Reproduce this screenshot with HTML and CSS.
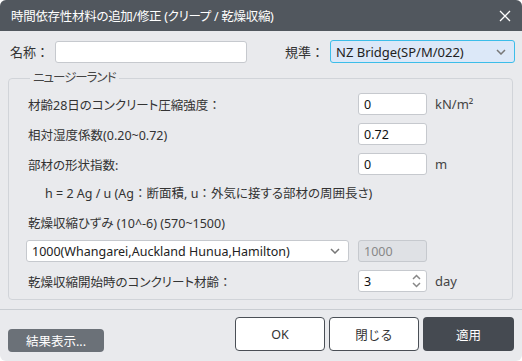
FILE: index.html
```html
<!DOCTYPE html>
<html lang="ja">
<head>
    <meta charset="UTF-8">
    <title>時間依存性材料の追加/修正</title>
    <link rel="stylesheet" href="styles.css">
</head>
<body>
    <div class="dialog">
        <!-- Titre -->
        <div class="titlebar">
            <span class="title">時間依存性材料の追加/修正 (クリープ / 乾燥収縮)</span>
            <svg class="close" width="12" height="12" viewBox="0 0 12 12"><path d="M1 1L11 11M11 1L1 11" stroke="#fff" stroke-width="1.3"/></svg>
        </div>

        <div class="top-row">
            <label class="name-label">名称<span class="colon">：</span></label>
            <input type="text" class="name-input">
            <label class="std-label">規準<span class="colon">：</span></label>
            <div class="select std-select">
                <span>NZ Bridge(SP/M/022)</span>
                <svg width="10" height="6" viewBox="0 0 10 6"><path d="M1 1L5 5L9 1" fill="none" stroke="#777" stroke-width="1.5"/></svg>
            </div>
        </div>

        <fieldset class="group">
            <legend>ニュージーランド</legend>
            <div class="row">
                <span class="lbl">材齢28日のコンクリート圧縮強度<span class="colon">：</span></span>
                <input type="text" class="num" value="0">
                <span class="unit">kN/m²</span>
            </div>
            <div class="row">
                <span class="lbl">相対湿度係数(0.20~0.72)</span>
                <input type="text" class="num" value="0.72">
                <span class="unit"></span>
            </div>
            <div class="row">
                <span class="lbl">部材の形状指数:</span>
                <input type="text" class="num" value="0">
                <span class="unit">m</span>
            </div>
            <div class="formula">h = 2 Ag / u (Ag<span class="colon">：</span>断面積, u<span class="colon">：</span>外気に接する部材の周囲長さ)</div>
            <div class="sub-title">乾燥収縮ひずみ (10^-6) (570~1500)</div>
            <div class="row">
                <div class="select city-select">
                    <span>1000(Whangarei,Auckland Hunua,Hamilton)</span>
                    <svg width="10" height="6" viewBox="0 0 10 6"><path d="M1 1L5 5L9 1" fill="none" stroke="#777" stroke-width="1.5"/></svg>
                </div>
                <input type="text" class="num disabled" value="1000" disabled>
                <span class="unit"></span>
            </div>
            <div class="row">
                <span class="lbl">乾燥収縮開始時のコンクリート材齢<span class="colon">：</span></span>
                <div class="spin">
                    <span>3</span>
                    <svg width="9" height="16" viewBox="0 0 9 16"><path d="M1 6L4.5 2.5L8 6M1 10L4.5 13.5L8 10" fill="none" stroke="#888" stroke-width="1.5"/></svg>
                </div>
                <span class="unit">day</span>
            </div>
        </fieldset>

        <div class="footer">
            <button class="btn btn-result">結果表示...</button>
            <div class="footer-right">
                <button class="btn btn-light">OK</button>
                <button class="btn btn-light">閉じる</button>
                <button class="btn btn-dark">適用</button>
            </div>
        </div>
    </div>
</body>
</html>
```

FILE: styles.css
```css
body {
    margin: 0;
    background: #ffffff;
    font-family: "Noto Sans", "Noto Sans CJK JP", sans-serif;
    font-size: 12.5px;
    font-weight: 400;
    font-feature-settings: "palt";
    color: #333;
}

.colon {
    font-feature-settings: normal;
}

.dialog {
    width: 522px;
    height: 361px;
    background: #e9eaed;
    border-radius: 6px;
    overflow: hidden;
    display: flex;
    flex-direction: column;
}

.titlebar {
    height: 31px;
    flex-shrink: 0;
    background: #51575e;
    color: white;
    display: flex;
    align-items: center;
    justify-content: space-between;
    padding: 0 11px 0 11px;
    font-size: 12.5px;
    letter-spacing: -0.3px;
}

.top-row {
    display: flex;
    align-items: center;
    margin-top: 9px;
    height: 23px;
    flex-shrink: 0;
    padding-left: 10px;
}

.name-label {
    width: 45px;
    font-size: 13px;
}

.name-input {
    width: 192px;
    height: 22px;
    box-sizing: border-box;
    border: 1px solid #c6c9ce;
    border-radius: 3px;
    background: white;
}

.std-label {
    margin-left: 38px;
    width: 45px;
    font-size: 13px;
}

.select {
    box-sizing: border-box;
    display: flex;
    align-items: center;
    justify-content: space-between;
    border: 1px solid #c6c9ce;
    border-radius: 3px;
    background: white;
    padding: 0 8px 0 5px;
    font-size: 12.5px;
    color: #222;
}

.std-select {
    width: 185px;
    height: 23px;
    background: #dce8f8;
    border-color: #3cbde9;
    font-size: 13px;
}

.group {
    margin: 7px 9px 0 8px;
    padding: 7px 0 0 19px;
    height: 230px;
    flex-shrink: 0;
    box-sizing: border-box;
    border: 1px solid #d1d4d9;
    border-radius: 4px;
}

.group legend {
    padding: 0 3px;
    margin-left: 2px;
    line-height: 16px;
    letter-spacing: -1px;
    color: #444;
}

.row {
    display: flex;
    align-items: center;
    height: 22px;
    margin-bottom: 8px;
}

.lbl {
    width: 330px;
}

.num {
    width: 69px;
    height: 22px;
    box-sizing: border-box;
    border: 1px solid #c6c9ce;
    border-radius: 3px;
    background: white;
    font-family: inherit;
    font-size: 12.5px;
    color: #111;
    padding: 0 5px;
}

.num.disabled {
    background: #dfe1e5;
    color: #888;
}

.unit {
    margin-left: 8px;
    font-size: 13px;
    color: #444;
}

.formula {
    height: 22px;
    line-height: 22px;
    padding-left: 17px;
    margin-bottom: 8px;
}

.sub-title {
    height: 22px;
    line-height: 22px;
    margin-bottom: 5px;
}

.city-select {
    width: 323px;
    height: 22px;
    margin-left: -2px;
    margin-right: 9px;
}

.spin {
    box-sizing: border-box;
    width: 69px;
    height: 22px;
    display: flex;
    align-items: center;
    justify-content: space-between;
    border: 1px solid #c6c9ce;
    border-radius: 3px;
    background: white;
    padding: 0 5px;
    font-size: 12.5px;
    color: #111;
}

.footer {
    margin-top: 9px;
    border-top: 1px solid #c9cdd2;
    display: flex;
    justify-content: space-between;
    padding: 7px 8px 0 8px;
}

.footer-right {
    display: flex;
    gap: 4px;
}

.btn {
    font-family: inherit;
    font-size: 12.5px;
    border-radius: 4px;
    cursor: pointer;
}

.btn-result {
    width: 96px;
    height: 23px;
    margin-top: 12px;
    background: #6b7178;
    color: white;
    border: none;
}

.btn-light {
    width: 90px;
    height: 34px;
    background: white;
    color: #333;
    border: 1px solid #4a4f56;
}

.btn-dark {
    width: 91px;
    height: 34px;
    background: #454a51;
    color: white;
    border: none;
}
```
